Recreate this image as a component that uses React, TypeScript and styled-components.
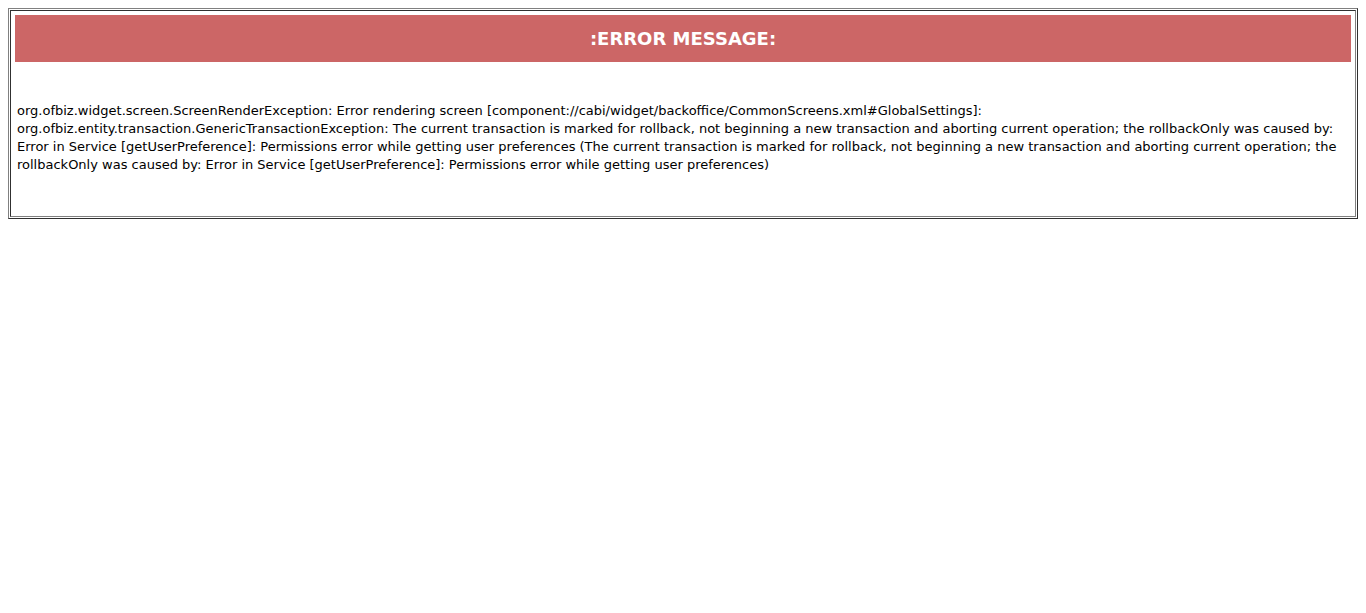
import styled, { createGlobalStyle } from 'styled-components';

const GlobalStyle = createGlobalStyle`
  body {
    margin: 8px;
    background: #ffffff;
    font-family: 'DejaVu Sans', Verdana, sans-serif;
    font-size: 13px;
    color: #000000;
  }
`;

const ErrorTable = styled.div`
  border: 1px solid;
  border-color: #808080 #303030 #303030 #808080;
  padding: 1px;
`;

const ErrorCell = styled.div`
  border: 1px solid;
  border-color: #303030 #808080 #808080 #303030;
  padding: 4px;
`;

const Header = styled.div`
  height: 47px;
  background: #cc6666;
  color: #ffffff;
  font-weight: bold;
  font-size: 18px;
  display: flex;
  align-items: center;
  justify-content: center;
`;

const Message = styled.div`
  padding: 40px 0 38px 2px;
  line-height: 18px;
`;

const App = (): JSX.Element => {
  return (
    <>
      <GlobalStyle />
      <ErrorTable>
        <ErrorCell>
          <Header>:ERROR MESSAGE:</Header>
          <Message>
            org.ofbiz.widget.screen.ScreenRenderException: Error rendering screen
            [component://cabi/widget/backoffice/CommonScreens.xml#GlobalSettings]:
            <br />
            org.ofbiz.entity.transaction.GenericTransactionException: The current
            transaction is marked for rollback, not beginning a new transaction and
            aborting current operation; the rollbackOnly was caused by: Error in
            Service [getUserPreference]: Permissions error while getting user
            preferences (The current transaction is marked for rollback, not
            beginning a new transaction and aborting current operation; the
            rollbackOnly was caused by: Error in Service [getUserPreference]:
            Permissions error while getting user preferences)
          </Message>
        </ErrorCell>
      </ErrorTable>
    </>
  );
};

export default App;
